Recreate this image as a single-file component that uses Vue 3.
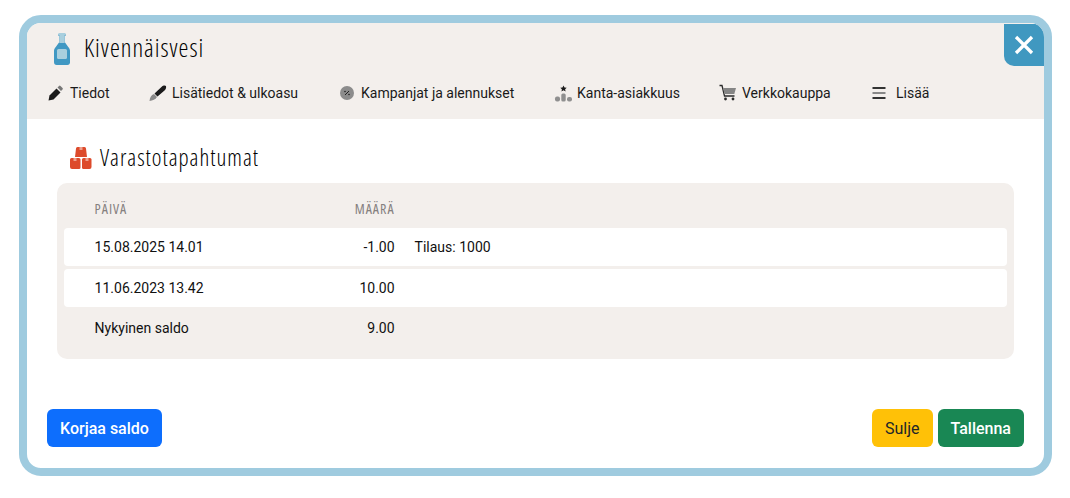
<script setup>
const tabs = [
  { label: 'Tiedot', icon: 'pen', w: 102 },
  { label: 'Lisätiedot & ulkoasu', icon: 'brush', w: 189 },
  { label: 'Kampanjat ja alennukset', icon: 'badge', w: 216 },
  { label: 'Kanta-asiakkuus', icon: 'rank', w: 165 },
  { label: 'Verkkokauppa', icon: 'cart', w: 153 },
  { label: 'Lisää', icon: 'menu', w: 80 }
]
const rows = [
  { date: '15.08.2025 14.01', amount: '-1.00', note: 'Tilaus: 1000' },
  { date: '11.06.2023 13.42', amount: '10.00', note: '' }
]
</script>

<template>
  <div class="page">
    <div class="modal">
      <header class="head">
        <div class="title-row">
          <svg class="bottle" width="18" height="32" viewBox="0 0 18 32">
            <path d="M5 1h8v2h-1v6l4 5c1 1 2 2 2 4v11c0 2-1 3-3 3H3c-2 0-3-1-3-3V18c0-2 1-3 2-4l4-5V3H5z" fill="#4098c3" transform="translate(1 0) scale(.89 1)"/>
            <path d="M5.5 0h7v2h-.8v8H6.300V2h-.8z" fill="#a9cfde"/>
            <rect x="4" y="16" width="10" height="10" rx="1.500" fill="#a9cfde"/>
          </svg>
          <h1>Kivennäisvesi</h1>
        </div>
        <nav class="tabs">
          <div v-for="t in tabs" :key="t.label" class="tab" :style="{ width: t.w + 'px' }">
            <svg class="ico" width="18" height="18" viewBox="0 0 18 18">
              <template v-if="t.icon === 'pen'">
                <path d="M1.500 16.500l1-5 7-7 4 4-7 7z" fill="#1b1b1b"/>
                <path d="M10.500 3.500l1.500-1.500a1 1 0 0 1 1.500 0l2 2a1 1 0 0 1 0 1.500L14 7z" fill="#777"/>
              </template>
              <template v-else-if="t.icon === 'brush'">
                <path d="M.5 17c.300-3 1.500-6 4.500-7l3 3c-1.500 2.500-4.500 3.700-7.500 4z" fill="#8a8a8a"/>
                <path d="M5.500 9.500l7.500-7c1-1 3-1.500 4-.500 .500 2-.500 3.500-1.500 4.500L8.500 12.500z" fill="#1b1b1b"/>
              </template>
              <template v-else-if="t.icon === 'badge'">
                <circle cx="9" cy="9" r="7" fill="#8c8c8c"/>
                <path d="M7 11l4-4" stroke="#222" stroke-width="1"/>
                <circle cx="7" cy="7.500" r=".8" fill="#222"/>
                <circle cx="11" cy="10.500" r=".8" fill="#222"/>
              </template>
              <template v-else-if="t.icon === 'rank'">
                <path d="M9.500 1.500l1 2 2.200.2-1.600 1.500.5 2.200-2.100-1.100-2 1.100.4-2.200L6.300 3.700 8.500 3.500z" fill="#1b1b1b"/>
                <rect x="1" y="12.500" width="5" height="5" rx="2" fill="#8f8f8f"/>
                <rect x="7.300" y="9.500" width="4.400" height="8" rx="1.500" fill="#8f8f8f"/>
                <rect x="13" y="13" width="5" height="4.500" rx="2" fill="#8f8f8f"/>
              </template>
              <template v-else-if="t.icon === 'cart'">
                <path d="M.5 1.500h2.500l2.500 10.500h10" fill="none" stroke="#2a2a2a" stroke-width="1.300"/>
                <path d="M4 4h13l-1.700 6H5.500z" fill="#858585"/>
                <circle cx="6.500" cy="15" r="1.400" fill="#2a2a2a"/>
                <circle cx="14" cy="15" r="1.400" fill="#2a2a2a"/>
              </template>
              <template v-else>
                <rect x=".5" y="3" width="13" height="2" fill="#333"/>
                <rect x=".5" y="8" width="13" height="2" fill="#888"/>
                <rect x=".5" y="13" width="13" height="2" fill="#333"/>
              </template>
            </svg>
            <span>{{ t.label }}</span>
          </div>
        </nav>
        <button class="close" aria-label="Sulje">
          <svg width="20" height="20" viewBox="0 0 20 20">
            <path d="M2 2l16 16M18 2L2 18" stroke="#fff" stroke-width="3.300"/>
          </svg>
        </button>
      </header>

      <main class="body">
        <div class="section-title">
          <svg class="boxes" width="24" height="24" viewBox="0 0 24 24">
            <path d="M7 2.500a1.500 1.500 0 0 1 1.500-1.500h7A1.500 1.500 0 0 1 17 2.500l1 8.500H6z" fill="#dd4a2b"/>
            <path d="M1 13.500A1.500 1.500 0 0 1 2.500 12h7.500a1.500 1.500 0 0 1 1.500 1.500v8a1.500 1.500 0 0 1-1.500 1.500H3a2 2 0 0 1-2-2z" fill="#dd4a2b"/>
            <path d="M13 13.500a1.500 1.500 0 0 1 1.500-1.500H21a1.500 1.500 0 0 1 1.500 1.500V21a2 2 0 0 1-2 2H14.500a1.500 1.500 0 0 1-1.500-1.500z" fill="#dd4a2b"/>
            <path d="M10.500 1h3v3h-3zM4.500 12h3v3h-3zM16.500 12h3v3h-3z" fill="#eda18f"/>
          </svg>
          <h2>Varastotapahtumat</h2>
        </div>

        <section class="panel">
          <div class="row labels">
            <div class="c-date">PÄIVÄ</div>
            <div class="c-amt">MÄÄRÄ</div>
          </div>
          <div v-for="r in rows" :key="r.date" class="row card">
            <div class="c-date">{{ r.date }}</div>
            <div class="c-amt">{{ r.amount }}</div>
            <div class="c-note">{{ r.note }}</div>
          </div>
          <div class="row total">
            <div class="c-date">Nykyinen saldo</div>
            <div class="c-amt">9.00</div>
          </div>
        </section>
      </main>

      <footer class="foot">
        <button class="btn blue">Korjaa saldo</button>
        <div class="right">
          <button class="btn yellow">Sulje</button>
          <button class="btn green">Tallenna</button>
        </div>
      </footer>
    </div>
  </div>
</template>

<style>
body { margin: 0; background: #fff; }
</style>

<style scoped>
.page {
  width: 1070px;
  height: 498px;
  padding: 15px 18px 22px 19px;
  box-sizing: border-box;
  font-family: Roboto, sans-serif;
  color: #111;
}
.modal {
  height: 100%;
  box-sizing: border-box;
  border: 8px solid #9fcbdf;
  border-radius: 22px;
  background: #fff;
  overflow: hidden;
  display: flex;
  flex-direction: column;
}
.head {
  position: relative;
  height: 96px;
  background: #f3efec;
  box-sizing: border-box;
  padding: 8px 0 0 25px;
}
.title-row {
  display: flex;
  align-items: center;
  gap: 13px;
  height: 36px;
  margin-left: 1px;
}
h1, h2 {
  margin: 0;
  font-family: "Open Sans", Lato, sans-serif;
  font-weight: 300;
  font-stretch: 75%;
  letter-spacing: 1px;
  color: #000;
  line-height: 1;
}
h1 { font-size: 25px; margin-top: -4px; }
h2 { font-size: 23px; margin-top: -4px; margin-left: 1px; }
.tabs {
  display: flex;
  margin-top: 14px;
  margin-left: -5px;
}
.tab {
  display: flex;
  align-items: center;
  gap: 5px;
  height: 24px;
  font-size: 14px;
  white-space: nowrap;
  color: #1a1a1a;
}
.tab:last-child { gap: 6px; }
.ico { flex: none; }
.close {
  position: absolute;
  top: 1px;
  right: 0;
  width: 40px;
  height: 42px;
  padding: 0;
  border: 0;
  background: #4098c0;
  border-radius: 0 8px 0 10px;
  display: flex;
  align-items: center;
  justify-content: center;
}
.body {
  flex: 1;
  padding: 24px 30px 0;
}
.section-title {
  display: flex;
  align-items: center;
  gap: 6px;
  margin-left: 12px;
  height: 32px;
}
.boxes { margin-top: -2px; }
.panel {
  margin-top: 8px;
  height: 176px;
  box-sizing: border-box;
  background: #f3efec;
  border-radius: 10px;
  padding: 7px 7px 0;
}
.row {
  display: flex;
  align-items: center;
  font-size: 14px;
  padding-left: 30.600px;
  padding-bottom: 1px;
  box-sizing: border-box;
}
.labels {
  height: 38px;
  font-family: "Open Sans", Lato, sans-serif;
  font-stretch: 75%;
  letter-spacing: 1px;
  font-size: 14px;
  color: #85807f;
}
.labels .c-amt { margin-right: -1px; }
.card {
  height: 38px;
  background: #fff;
  border-radius: 4px;
  margin-bottom: 3px;
}
.total { height: 37px; }
.c-date { width: 230px; }
.c-amt { width: 70px; text-align: right; }
.c-note { margin-left: 20px; }
.foot {
  height: 59px;
  padding: 0 20px;
  display: flex;
  justify-content: space-between;
  align-items: flex-start;
  box-sizing: border-box;
}
.right { display: flex; gap: 5px; }
.btn {
  height: 38px;
  padding: 0 13px;
  border: 0;
  border-radius: 6px;
  font-family: Roboto, sans-serif;
  font-size: 16px;
  font-weight: 500;
}
.blue { background: #0d6efd; color: #fff; }
.yellow { background: #ffc107; color: #212529; font-weight: 400; }
.green { background: #198754; color: #fff; }
</style>
